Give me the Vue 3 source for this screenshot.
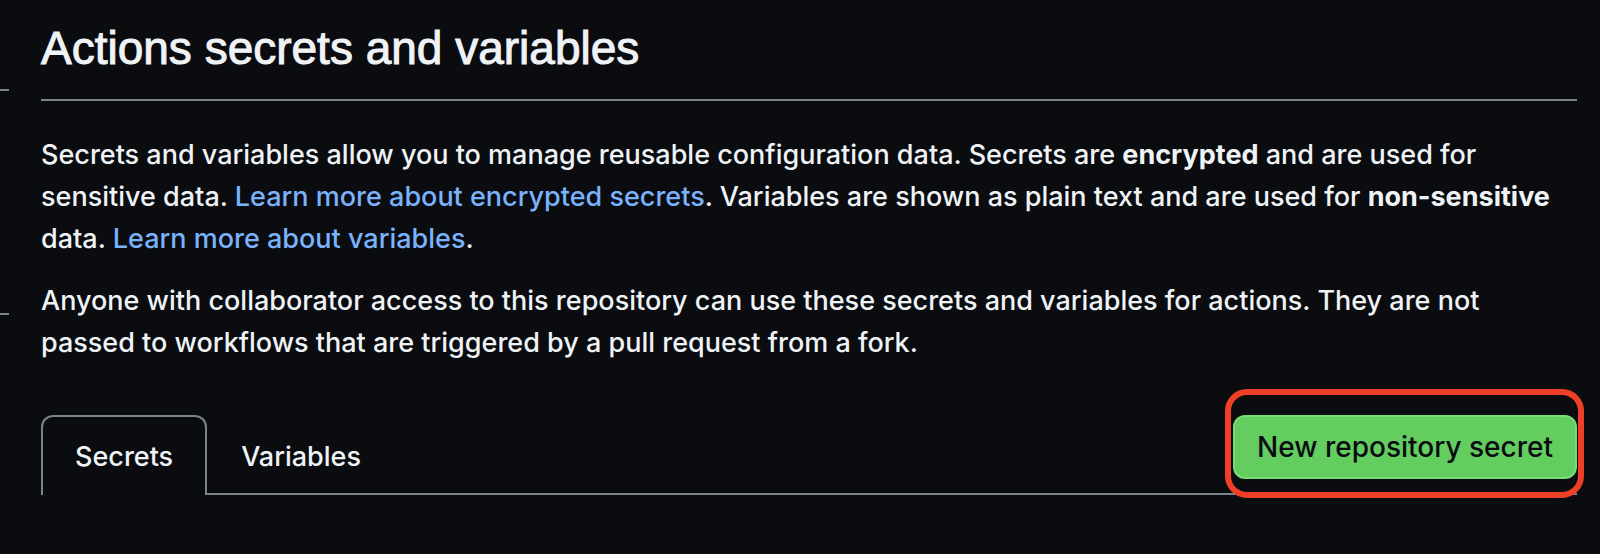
<script setup>
import { ref } from 'vue'

const tabs = ['Secrets', 'Variables']
const active = ref('Secrets')
</script>

<template>
  <div class="page">
    <aside class="rail">
      <hr />
      <hr />
    </aside>
    <main class="content">
      <h1 class="title">Actions secrets and variables</h1>
      <p>
        Secrets and variables allow you to manage reusable configuration data. Secrets are
        <strong>encrypted</strong> and are used for sensitive data.
        <a href="#secrets">Learn more about encrypted secrets</a>. Variables are shown as plain text
        and are used for <strong>non-sensitive</strong> data.
        <a href="#variables">Learn more about variables</a>.
      </p>
      <p>
        Anyone with collaborator access to this repository can use these secrets and variables for
        actions. They are not passed to workflows that are triggered by a pull request from a fork.
      </p>
      <div class="tabnav">
        <nav class="tabs" aria-label="Secrets and variables">
          <button
            v-for="tab in tabs"
            :key="tab"
            type="button"
            class="tab"
            :class="{ selected: tab === active }"
            @click="active = tab"
          >{{ tab }}</button>
        </nav>
        <div class="action">
          <button type="button" class="primary">New repository secret</button>
        </div>
      </div>
    </main>
  </div>
</template>

<style>
body {
  margin: 0;
  background: #0a0c10;
}
</style>

<style scoped>
.page {
  box-sizing: border-box;
  display: flex;
  gap: 32px;
  min-height: 100vh;
  padding-right: 23px;
  background: #0a0c10;
  color: #f0f3f6;
  font-family: Inter, "Liberation Sans", sans-serif;
  font-size: 27px;
  font-weight: 500;
  line-height: 42px;
}
.rail {
  display: flex;
  flex-direction: column;
  gap: 222px;
  width: 9px;
  padding-top: 89px;
}
.rail hr {
  width: 100%;
  height: 2px;
  margin: 0;
  border: 0;
  background: #7a828e;
}
.content {
  flex: 1;
  min-width: 0;
}
.title {
  margin: 0 0 33px;
  padding: 12px 0 15px;
  border-bottom: 2px solid #7a828e;
  font-family: "Liberation Sans", Arial, sans-serif;
  font-size: 46px;
  font-weight: 400;
  line-height: 72px;
  -webkit-text-stroke: 1px #f0f3f6;
}
p {
  margin: 0 0 20px;
}
strong {
  font-weight: 700;
}
a {
  color: #7ab2fb;
  text-decoration: none;
}
.tabnav {
  display: flex;
  justify-content: space-between;
  align-items: flex-start;
  margin-top: 51px;
  border-bottom: 2px solid #7a828e;
}
.tabs {
  display: flex;
  margin-bottom: -2px;
}
button {
  font: inherit;
  cursor: pointer;
}
.tab {
  padding: 19px 32px 17px;
  border: 2px solid transparent;
  border-bottom: 0;
  border-radius: 12px 12px 0 0;
  background: transparent;
  color: #f0f3f6;
}
.tab.selected {
  border-color: #7a828e;
  background: #0a0c10;
}
.action {
  position: relative;
}
.action::after {
  content: "";
  position: absolute;
  inset: -26px -7px -19px -8px;
  border: 6px solid #ee4026;
  border-radius: 22px;
  pointer-events: none;
}
.primary {
  display: block;
  padding: 9px 22px;
  border: 2px solid #74e073;
  border-radius: 12px;
  background: #63cd60;
  color: #0a0c10;
  font-size: 28px;
}
</style>
